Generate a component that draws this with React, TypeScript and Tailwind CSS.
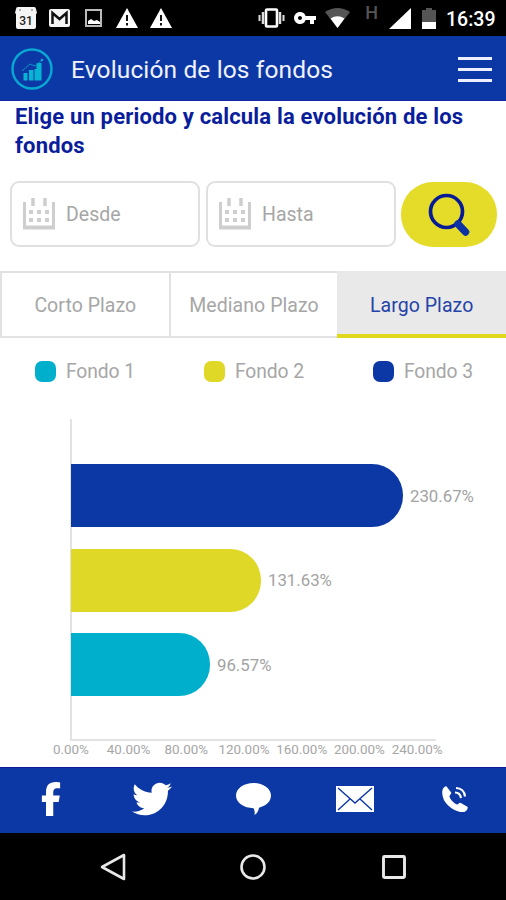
import React, { useState } from 'react';
import { FaTwitter } from 'react-icons/fa';
import { FaFacebookF } from 'react-icons/fa6';
import { MdVpnKey } from 'react-icons/md';

interface Fund {
  name: string;
  value: string;
  dot: string;
  bar: string;
}

const funds: Fund[] = [
  { name: 'Fondo 1', value: '96.57%', dot: 'bg-[#00afcb]', bar: 'w-[139px] bg-[#00afcb]' },
  { name: 'Fondo 2', value: '131.63%', dot: 'bg-[#e0d826]', bar: 'w-[190px] bg-[#e0d826]' },
  { name: 'Fondo 3', value: '230.67%', dot: 'bg-[#0c38a5]', bar: 'w-[332px] bg-[#0c38a5]' },
];

const tabs = ['Corto Plazo', 'Mediano Plazo', 'Largo Plazo'];
const ticks = ['0.00%', '40.00%', '80.00%', '120.00%', '160.00%', '200.00%', '240.00%'];

const WarningIcon = () => (
  <svg className="w-[22px] h-5" viewBox="0 0 22 20">
    <path d="M11 0 22 20H0Z" fill="#fff" />
    <path d="M11 7v6M11 15v2.5" stroke="#111" strokeWidth="2" />
  </svg>
);

const StatusBar = () => (
  <div className="h-9 shrink-0 bg-black flex items-center justify-between pl-[14px] pr-[11px]">
    <div className="flex items-center">
      <svg className="w-6 h-6" viewBox="0 0 24 24">
        <path d="M2 3q0-2 2-2h16q2 0 2 2l1 4-1 1v13q0 2-2 2H4q-2 0-2-2V8L1 7Z" fill="#f5f5f5" />
        <path d="M6 3v2M18 3v2" stroke="#999" strokeWidth="1.500" />
        <text x="12" y="18.500" textAnchor="middle" fontSize="12" fontWeight="500" fill="#222" fontFamily="Roboto, sans-serif">31</text>
      </svg>
      <svg className="w-[21px] h-[18px] ml-[11px]" viewBox="0 0 21 18">
        <rect width="21" height="18" rx="2" fill="#f5f5f5" />
        <path d="M3.500 15V4l7 6 7-6v11" fill="none" stroke="#111" strokeWidth="2.500" />
      </svg>
      <svg className="w-[17px] h-[18px] ml-[15px]" viewBox="0 0 17 18">
        <rect x="1" y="1" width="15" height="16" fill="none" stroke="#bbb" strokeWidth="2" />
        <path d="M3 15v-3l3-2 3 2 3-1 3 2v2Z" fill="#fff" />
      </svg>
      <div className="flex gap-3 ml-[14px]">
        <WarningIcon />
        <WarningIcon />
      </div>
    </div>
    <div className="flex items-center">
      <svg className="w-[27px] h-5" viewBox="0 0 27 20">
        <rect x="8" y="1.500" width="11" height="17" rx="1" fill="none" stroke="#fff" strokeWidth="2.600" />
        <path d="M5 4v12M22 4v12" stroke="#ddd" strokeWidth="2.500" />
        <path d="M1.500 7v6M25.500 7v6" stroke="#ddd" strokeWidth="2" />
      </svg>
      <MdVpnKey className="w-6 h-6 ml-2 text-white" />
      <svg className="w-[25px] h-5 ml-[8px]" viewBox="0 0 25 20">
        <path d="M0 4Q12.500-4 25 4L12.500 20Z" fill="#555" />
        <path d="M5.500 10.500Q12.500 6 19.500 10.500L12.500 20Z" fill="#fff" />
      </svg>
      <span className="text-[18px] leading-none font-medium text-[#555] ml-[15px] mb-[10px]">H</span>
      <svg className="w-[22px] h-[21px] ml-[11px]" viewBox="0 0 22 21">
        <path d="M22 0v21H0Z" fill="#fff" />
      </svg>
      <svg className="w-[14px] h-[21px] ml-[11px]" viewBox="0 0 14 21">
        <path d="M4 0h6v2h4v12H0V2h4Z" fill="#555" />
        <path d="M0 14h14v7H0Z" fill="#fff" />
      </svg>
      <span className="text-[19.5px] font-medium text-white ml-[10px] w-[49px] mt-[3px]">16:39</span>
    </div>
  </div>
);

const Header = () => (
  <header className="h-[65px] shrink-0 bg-[#0c38a5] border-b border-[#1828a0] flex items-center pl-[11px] pr-[14px]">
    <svg className="w-[42px] h-[42px] mt-px" viewBox="0 0 42 42">
      <circle cx="21" cy="21" r="19.500" fill="none" stroke="#08a9d2" strokeWidth="2.400" />
      <path
        d="M12.500 25h4v7.500h-4ZM18 22h4.500v10.500H18ZM23.500 21h2v11.500h-2ZM25.500 15h5v17.500h-5Z"
        fill="#08b4d4"
      />
      <path d="m11 23 8-7 5 2 6-5" fill="none" stroke="#0894c8" strokeWidth="1" />
      <circle cx="31" cy="12" r="1.200" fill="#08b4d4" />
    </svg>
    <h1 className="ml-[18px] mt-[4px] text-[24.5px] tracking-[0.13px] text-[#f0f2ff] whitespace-nowrap">Evolución de los fondos</h1>
    <button className="ml-auto mt-[3px] w-[34px] flex flex-col gap-[8px]">
      <span className="h-[3px] bg-[#eef0ff]" />
      <span className="h-[3px] bg-[#eef0ff]" />
      <span className="h-[3px] bg-[#eef0ff]" />
    </button>
  </header>
);

const DateField: React.FC<{ label: string }> = ({ label }) => (
  <div className="w-[190px] h-[66px] rounded-[9px] border-2 border-[#e0e0e0] flex items-center pl-[11px]">
    <svg className="w-8 h-[33px]" viewBox="0 0 32 33" fill="none" stroke="#cecece">
      <path d="M1.500 4v26" strokeWidth="3" />
      <path d="M30.500 4v26" strokeWidth="3" />
      <path d="M0 29.500h32" strokeWidth="4" />
      <path d="M10 0v8M22 0v8" strokeWidth="3.500" />
      <path d="M6 14h4M14 14h4M22 14h4M6 22h4M14 22h4M22 22h4" strokeWidth="4" />
    </svg>
    <span className="ml-[11px] mt-[2px] text-[19.5px] text-[#a6a6a6]">{label}</span>
  </div>
);

const Chart = () => (
  <div className="mt-[23px] h-[348px] shrink-0">
    <div className="ml-[70px] w-[366px] h-[322px] border-l-2 border-b-2 border-[#e2e2e2] pt-[45px]">
      <div className="-ml-px flex flex-col gap-[21.500px]">
        {[...funds].reverse().map((fund) => (
          <div key={fund.name} className="flex items-center h-[63px]">
            <div className={`h-full shrink-0 rounded-r-[31px] ${fund.bar}`} />
            <span className="ml-[7px] mt-[2px] text-[16.8px] text-[#a3a3a3]">{fund.value}</span>
          </div>
        ))}
      </div>
    </div>
    <div className="ml-[42px] w-[404px] grid grid-cols-7 text-center text-[13.4px] leading-[17px] text-[#a6a6a6]">
      {ticks.map((tick) => (
        <span key={tick}>{tick}</span>
      ))}
    </div>
  </div>
);

const SocialBar = () => (
  <div className="h-[66px] shrink-0 bg-[#0c38a5] border-t border-[#101c9c] grid grid-cols-5 place-items-center pb-[3px] text-white">
    <FaFacebookF className="w-[20px] h-[34px]" preserveAspectRatio="none" />
    <FaTwitter className="w-10 h-10" />
    <svg className="w-[35px] h-[33px] ml-[2px]" viewBox="0 0 35 34" preserveAspectRatio="none">
      <path d="M17.500 0C27 0 35 5.500 35 13c0 6-4.500 10.500-12 12.500-.5 3-2 6-4.500 7.500.5-3 0-5-1-7C8 26 0 20.500 0 13S8 0 17.500 0Z" fill="currentColor" />
    </svg>
    <svg className="w-[38px] h-[26px] ml-px" viewBox="0 0 38 26">
      <path d="M0 0h38v26H0Z" fill="currentColor" />
      <path d="m2 2 17 15L36 2M2 24l12-11M36 24 24 13" fill="none" stroke="#0c38a5" strokeWidth="1.400" />
    </svg>
    <svg className="w-[26px] h-[26px]" viewBox="0 0 26 26">
      <path d="M4 1 8.500 7 6.500 10.500C8 14.500 11 17.500 15 19.500l3-2L25 21.500c0 2-2 4-4.500 4C11 25 .5 16 1 6 1 4 2 2 4 1Z" fill="currentColor" stroke="currentColor" strokeWidth="1.500" strokeLinejoin="round" />
      <path d="M13 6.500c3 0 5.500 2 6 5.500M14 2c5 0 8.500 3.500 9 8.500" fill="none" stroke="currentColor" strokeWidth="2.200" />
    </svg>
  </div>
);

const NavBar = () => (
  <div className="h-[67px] shrink-0 bg-black grid grid-cols-3 place-items-center px-[42px]">
    <svg className="w-7 h-7 ml-px" viewBox="0 0 28 28">
      <path d="M25 2v24L3 14Z" fill="none" stroke="#e8e8e8" strokeWidth="2.600" strokeLinejoin="round" />
    </svg>
    <svg className="w-7 h-7" viewBox="0 0 28 28">
      <circle cx="14" cy="14" r="11.500" fill="none" stroke="#e8e8e8" strokeWidth="2.600" />
    </svg>
    <svg className="w-7 h-7" viewBox="0 0 28 28">
      <rect x="3.500" y="3.500" width="21" height="21" rx="1" fill="none" stroke="#e8e8e8" strokeWidth="2.900" />
    </svg>
  </div>
);

const App: React.FC = () => {
  const [activeTab, setActiveTab] = useState('Largo Plazo');

  return (
    <div className="w-[506px] h-[900px] bg-white flex flex-col overflow-hidden font-['Roboto',sans-serif]">
      <StatusBar />
      <Header />
      <h2 className="h-[80px] shrink-0 pl-[15px] pt-[2px] text-[22px] leading-[28.5px] font-bold tracking-[0.17px] text-[#0a1d9b] whitespace-nowrap">
        Elige un periodo y calcula la evolución de los
        <br />
        fondos
      </h2>
      <div className="h-[66px] shrink-0 flex pl-[10px] gap-[6px]">
        <DateField label="Desde" />
        <DateField label="Hasta" />
        <button className="-ml-px w-[96px] h-[65px] mt-px rounded-[32px] bg-[#e5dc2a] flex items-center justify-center">
          <svg className="w-[42px] h-[44px]" viewBox="0 0 42 44" fill="none">
            <circle cx="18.500" cy="18.500" r="16" stroke="#071b96" strokeWidth="3.700" />
            <path d="m30 31 7.500 8" stroke="#0c32a4" strokeWidth="7.500" strokeLinecap="round" />
          </svg>
        </button>
      </div>
      <div className="mt-[24px] h-[67px] shrink-0 grid grid-cols-3 text-[19.5px] tracking-[0.05px]">
        {tabs.map((tab) => (
          <button
            key={tab}
            onClick={() => setActiveTab(tab)}
            className={
              tab === activeTab
                ? 'pt-[2px] bg-[#e9e9e9] text-[#2443a8] border-b-4 border-b-[#e0d81c] border-t-4 border-t-[#e9e9e9]'
                : 'pt-[2px] text-[#a6a6a6] border-2 border-r-0 border-[#e2e2e2]'
            }
          >
            {tab}
          </button>
        ))}
      </div>
      <div className="h-[49px] shrink-0 mt-[8px] mb-px pl-[35px] grid grid-cols-[169px_169px_auto]">
        {funds.map((fund) => (
          <div key={fund.name} className="flex h-[50px] items-center">
            <span className={`w-[21px] h-[21px] rounded-[7px] ${fund.dot}`} />
            <span className="ml-[10px] mt-[3px] text-[19.3px] tracking-[-0.1px] text-[#a6a6a6]">{fund.name}</span>
          </div>
        ))}
      </div>
      <Chart />
      <SocialBar />
      <NavBar />
    </div>
  );
};

export default App;
